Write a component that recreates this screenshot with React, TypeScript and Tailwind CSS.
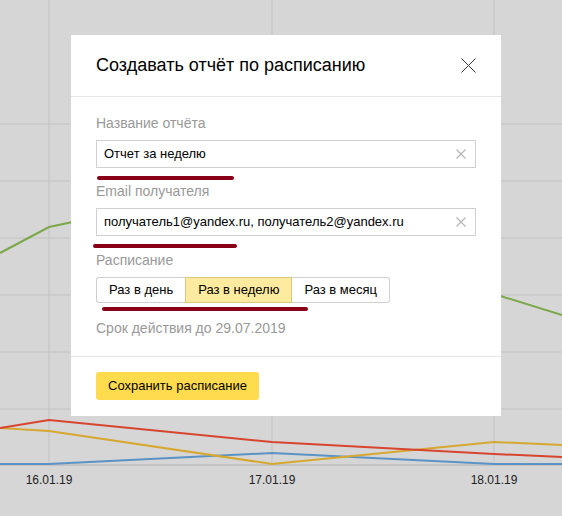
import React from "react";

const font = { fontFamily: '"Liberation Sans", Arial, sans-serif' };

const ClearIcon = () => (
	<svg width="10" height="10" viewBox="0 0 10 10" className="shrink-0">
		<path d="M0.5 0.5 L9.5 9.5 M9.5 0.5 L0.5 9.5" stroke="#b3b3b3" strokeWidth="1.1" />
	</svg>
);

const Field = ({ label, value }: { label: string; value: string }) => (
	<div className="flex flex-col">
		<div className="text-[14px] leading-[18px] text-[#999]">{label}</div>
		<div className="mt-2 h-[28px] border border-[#d0d0d0] flex items-center pl-[7px] pr-[9px]">
			<span className="flex-1 text-[13px] text-black truncate">{value}</span>
			<ClearIcon />
		</div>
	</div>
);

const Chart = () => {
	const hLines = [124, 181, 238, 295, 352, 409];
	const vLines = [49, 272, 494];
	return (
		<svg width="562" height="516" className="block">
			{hLines.map((y) => (
				<line key={y} x1="0" x2="562" y1={y} y2={y} stroke="#c2c2c2" strokeWidth="1" />
			))}
			{vLines.map((x) => (
				<line key={x} x1={x} x2={x} y1="0" y2="465" stroke="#c2c2c2" strokeWidth="1" />
			))}
			<line x1="0" x2="562" y1="465" y2="465" stroke="#bdbdbd" strokeWidth="1.5" />
			<polyline points="0,253 49,227 272,180 494,294 562,315" fill="none" stroke="#7aa84a" strokeWidth="2" />
			<polyline points="0,464 49,464 272,453 494,464 562,464" fill="none" stroke="#5b93c4" strokeWidth="2" />
			<polyline points="0,428 49,431 272,464 494,442 562,445" fill="none" stroke="#d6a832" strokeWidth="2" />
			<polyline points="0,428 49,420 272,442 494,454 562,457" fill="none" stroke="#d7452f" strokeWidth="2" />
			{[
				["16.01.19", 49],
				["17.01.19", 272],
				["18.01.19", 494],
			].map(([t, x]) => (
				<text key={t} x={x} y="484" textAnchor="middle" fontSize="12" fill="#222" style={font}>
					{t}
				</text>
			))}
		</svg>
	);
};

const Mark = ({ className }: { className: string }) => (
	<div className={`absolute h-[4px] rounded-full bg-[#870017] ${className}`} />
);

export default function App() {
	const options = ["Раз в день", "Раз в неделю", "Раз в месяц"];
	return (
		<div className="relative w-[562px] h-[516px] overflow-hidden bg-[#d6d6d6]" style={font}>
			<Chart />
			<div className="absolute left-[71px] top-[35px] w-[430px] bg-white">
				<div className="h-[62px] px-[25px] flex items-center justify-between border-b border-[#e6e6e6]">
					<h2 className="text-[18px] text-black">Создавать отчёт по расписанию</h2>
					<svg width="15" height="15" viewBox="0 0 15 15">
						<path d="M0.5 0.5 L14.5 14.5 M14.5 0.5 L0.5 14.5" stroke="#333" strokeWidth="1" />
					</svg>
				</div>
				<div className="px-[25px] pt-[17px] pb-[19px] flex flex-col">
					<Field label="Название отчёта" value="Отчет за неделю" />
					<div className="mt-[14px]">
						<Field label="Email получателя" value="получатель1@yandex.ru, получатель2@yandex.ru" />
					</div>
					<div className="mt-[15px] text-[14px] leading-[18px] text-[#999]">Расписание</div>
					<div className="mt-2 flex">
						{options.map((o, i) => (
							<div
								key={o}
								className={`h-[26px] px-[12px] flex items-center text-[13px] text-black border ${
									i === 1
										? "bg-[#ffeba0] border-[#dcc77f]"
										: "bg-white border-[#d0d0d0]"
								} ${i === 0 ? "rounded-l-[3px] border-r-0" : ""} ${
									i === 2 ? "rounded-r-[3px] border-l-0" : ""
								}`}
							>
								{o}
							</div>
						))}
					</div>
					<div className="mt-[16px] text-[14px] leading-[18px] text-[#999]">Срок действия до 29.07.2019</div>
				</div>
				<div className="border-t border-[#e6e6e6] px-[25px] pt-[15px] pb-[16px]">
					<button className="h-[28px] px-[12px] rounded-[3px] bg-[#ffdb4d] text-[13px] text-black">
						Сохранить расписание
					</button>
				</div>
				<Mark className="left-[26px] top-[141px] w-[137px]" />
				<Mark className="left-[22px] top-[209px] w-[144px]" />
				<Mark className="left-[31px] top-[272px] w-[206px]" />
			</div>
		</div>
	);
}
